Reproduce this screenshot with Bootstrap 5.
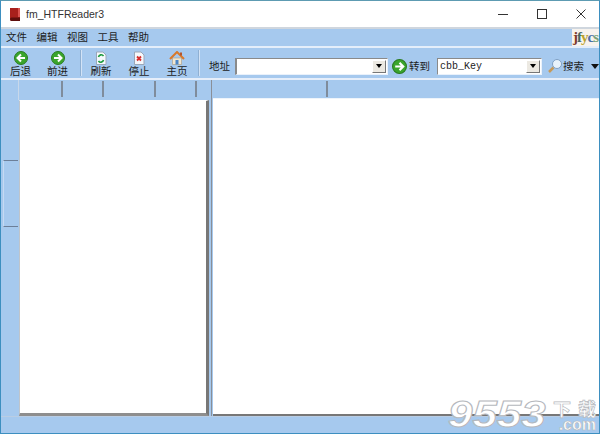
<!DOCTYPE html>
<html lang="zh"><head><meta charset="utf-8"><title>fm_HTFReader3</title>
<link href="https://cdn.jsdelivr.net/npm/bootstrap@5.3.0/dist/css/bootstrap.min.css" rel="stylesheet">
<style>
html,body{margin:0;height:434px;width:600px;overflow:hidden;background:#a6c9ee}
body{font-family:"Liberation Sans","Noto Sans CJK SC",sans-serif;font-size:10.5px;color:#1c1c1c;line-height:1}
.win{width:600px;height:434px;position:relative;border:1px solid #3d8fc0;border-top-color:#5d9bb2;background:#a6c9ee}
.tbar{height:26px;background:#fff;font-size:10.5px;padding-left:7px;color:#333;flex:none}
.tbar .ttl{margin-left:4px}
.wbtn{width:39px;display:flex;justify-content:center}
.mbar{height:21px;background:#a6c9ee;border-top:2px solid #cfd6de;border-bottom:2px solid #e4eefa;padding-left:5px;flex:none;position:relative}
.mbar span{margin-right:9.500px;font-size:10.5px}
.logo{position:absolute;right:0;top:0;width:27px;height:17px;background:#f7f3ee;font:bold 15px "Liberation Serif",serif;letter-spacing:-1px;padding-left:1px;overflow:hidden;white-space:nowrap;line-height:17px}
.logo b:nth-child(1){color:#7d3a2a}.logo b:nth-child(2){color:#466}.logo b:nth-child(3){color:#b9a22c}.logo b:nth-child(4){color:#4a6fa8}.logo b:nth-child(5){color:#7aa37a}
.tools{height:32px;background:#a6c9ee;flex:none;border-bottom:2px solid #e6eefa;padding-left:1px;white-space:nowrap}
.tools>*{flex:none}
.tool{width:37px;display:flex;flex-direction:column;align-items:center;font-size:10.5px;gap:1px;padding-top:1px}
.tool.wide{width:38px}
.tool svg{display:block}
.sep{width:2px;height:26px;margin-left:4px;background:#8fb0d3;border-right:1px solid #d3e3f6}
.sep.sep2{margin-left:2px}
.lab{font-size:10.5px;margin-top:6px}
.lab.addrlab{margin-left:9px}
.combo{height:17px;margin-top:6px;background:#fff;border:1px solid;border-color:#8a8a8a #e9f1fb #e9f1fb #8a8a8a;position:relative;display:flex;align-items:center;font:10px "Liberation Mono",monospace;padding-left:2px;color:#222}
.combo i{position:absolute;right:1px;top:1px;width:14px;height:13px;background:#ece9e2;border:1px solid;border-color:#fff #777 #777 #fff;display:flex;align-items:center;justify-content:center}
.combo i::after{content:"";border:3px solid transparent;border-top:4px solid #000;border-bottom:0}
.addr{width:153px;margin-left:5px;margin-right:4px;border-left-width:2px}
.key{width:105px;margin-left:7px}
.golab{margin-left:2px}
.gob{margin-top:6px}
.mag{margin-left:5px;margin-top:6px}
.drop{margin-left:7px;margin-top:6px}
.main{flex:1 1 auto;min-height:0;background:#a6c9ee}
.rail{width:17px;flex:none;display:flex;flex-direction:column;padding-top:80px}
.rail div{height:67px;border-top:1px solid #6c7f99;border-bottom:1px solid #6c7f99;margin-left:2px;border-left:1px solid #c5daf3}
.lpane{width:191px;flex:none;display:flex;flex-direction:column}
.rpane{flex:1 1 auto;display:flex;flex-direction:column;margin-left:2px;border-left:1px solid #8a8f98;padding-left:1px}
.heads{height:18px;display:flex;flex:none;background:#a6c9ee}
.heads span{display:block;border-right:2px solid #7f8c9c;height:16px;margin-top:1px}
.lpane .heads{border-left:1px solid #c8d8ea;height:20px}
.lbody{flex:1;background:#fff;margin-left:1px;border:1px solid #bfc5cc;border-right:3px solid #777;border-bottom:3px solid #8e8e8e;border-top-color:#fff}
.rbody{flex:1;background:#fff;border-bottom:2px solid #777;border-top:1px solid #eef4fb}
.sbar{height:17px;flex:none;border-top:1px solid #b9cde4;background:#a6c9ee}
.wmbox{position:absolute;right:2px;bottom:0;width:149px;height:36px;white-space:nowrap}
.wm{position:absolute;left:0;top:0;font:italic bold 36px/36px "Liberation Sans",sans-serif;color:#fff;-webkit-text-stroke:1px #b5b8bd;transform:scaleX(1.22);transform-origin:left center}
.wm2{position:absolute;right:1px;top:2px;font:600 18px/18px "Noto Sans CJK SC",sans-serif;letter-spacing:7px;margin-right:-7px;color:#fff;-webkit-text-stroke:.7px #b5b8bd}
.wm3{position:absolute;right:1px;bottom:1px;font:bold 16px/14px "Liberation Sans",sans-serif;color:#fff;-webkit-text-stroke:.6px #b5b8bd}
</style></head><body>
<div class="win d-flex flex-column">
 <div class="tbar d-flex align-items-center">
  <svg width="14" height="15" viewBox="0 0 14 15"><path d="M2 1h10v13H3.500Q2 14 2 12z" fill="#a8201c"/><path d="M2 12q0-1.500 1.500-1.500H12V14H3.500Q2 14 2 12z" fill="#5e0f0d"/><path d="M10 1h2v9h-2z" fill="#d9534f"/></svg>
  <span class="ttl">fm_HTFReader3</span>
  <div class="ms-auto d-flex" style="margin-right:-1px">
   <div class="wbtn"><svg width="10" height="10"><path d="M0 5.500h10" stroke="#333"/></svg></div>
   <div class="wbtn"><svg width="10" height="10"><rect x=".5" y=".5" width="9" height="9" fill="none" stroke="#333"/></svg></div>
   <div class="wbtn"><svg width="10" height="10"><path d="M.5.500l9 9M9.500.500l-9 9" stroke="#333"/></svg></div>
  </div>
 </div>
 <div class="mbar d-flex align-items-center">
  <span>文件</span><span>编辑</span><span>视图</span><span>工具</span><span>帮助</span>
  <div class="logo"><b>j</b><b>f</b><b>y</b><b>c</b><b>s</b></div>
 </div>
 <div class="tools d-flex align-items-center">
  <div class="tool"><svg width="14" height="14" viewBox="0 0 14 14"><circle cx="7" cy="7" r="6.500" fill="#3aa52c" stroke="#2b7a22"/><path d="M11 7H4M7 3.500 3.500 7 7 10.500" fill="none" stroke="#fff" stroke-width="2"/></svg>后退</div>
  <div class="tool"><svg width="14" height="14" viewBox="0 0 14 14"><circle cx="7" cy="7" r="6.500" fill="#3aa52c" stroke="#2b7a22"/><path d="M3 7h7M7 3.500 10.500 7 7 10.500" fill="none" stroke="#fff" stroke-width="2"/></svg>前进</div>
  <div class="sep"></div>
  <div class="tool wide"><svg width="14" height="14" viewBox="0 0 14 14"><path d="M2.500 1H9l3 3v9.500H2.500z" fill="#f5f8fc" stroke="#9aa7b8"/><path d="M4.500 6a2.800 2.800 0 0 1 5 -1M9.500 9a2.800 2.800 0 0 1-5 1" fill="none" stroke="#1c9a3c" stroke-width="1.600"/></svg>刷新</div>
  <div class="tool wide"><svg width="14" height="14" viewBox="0 0 14 14"><path d="M2.500 1H9l3 3v9.500H2.500z" fill="#f5f8fc" stroke="#9aa7b8"/><path d="M5 5.500l4 4M9 5.500l-4 4" stroke="#d62d2d" stroke-width="1.800"/></svg>停止</div>
  <div class="tool wide"><svg width="16" height="14" viewBox="0 0 16 14"><path d="M3.500 7v6.500h9V7z" fill="#f1e6d0" stroke="#a99a80" stroke-width=".6"/><path d="M1 8 8 1l7 7" fill="none" stroke="#d9792a" stroke-width="2"/><rect x="6.500" y="9" width="3" height="4.500" fill="#4a86c8"/><rect x="11" y="1.500" width="2" height="3" fill="#b5552a"/></svg>主页</div>
  <div class="sep sep2"></div>
  <span class="lab addrlab">地址</span>
  <div class="combo addr"><i></i></div>
  <svg class="gob" width="15" height="15" viewBox="0 0 14 14"><circle cx="7" cy="7" r="6.500" fill="#3aa52c" stroke="#2b7a22"/><path d="M3 7h7M7 3.500 10.500 7 7 10.500" fill="none" stroke="#fff" stroke-width="2"/></svg>
  <span class="lab golab">转到</span>
  <div class="combo key">cbb_Key<i></i></div>
  <svg class="mag" width="16" height="16" viewBox="0 0 16 16"><circle cx="10" cy="6" r="4.500" fill="#e8f2fb" stroke="#7fa0c4"/><path d="M6.500 9.500 2 14" stroke="#c69a5a" stroke-width="2.500"/></svg>
  <span class="lab">搜索</span>
  <svg class="drop" width="8" height="5"><path d="M0 0h8L4 5z" fill="#111"/></svg>
 </div>
 <div class="main d-flex flex-grow-1">
  <div class="rail"><div></div></div>
  <div class="lpane">
   <div class="heads"><span style="width:44px"></span><span style="width:41px"></span><span style="width:52px"></span><span style="width:41px"></span></div>
   <div class="lbody"></div>
  </div>
  <div class="rpane">
   <div class="heads"><span style="width:115px"></span></div>
   <div class="rbody"></div>
  </div>
 </div>
 <div class="sbar"></div>
 <div class="wmbox">
  <span class="wm">9553</span>
  <span class="wm2">下载</span>
  <span class="wm3">.com</span>
 </div>
</div>
</body></html>
